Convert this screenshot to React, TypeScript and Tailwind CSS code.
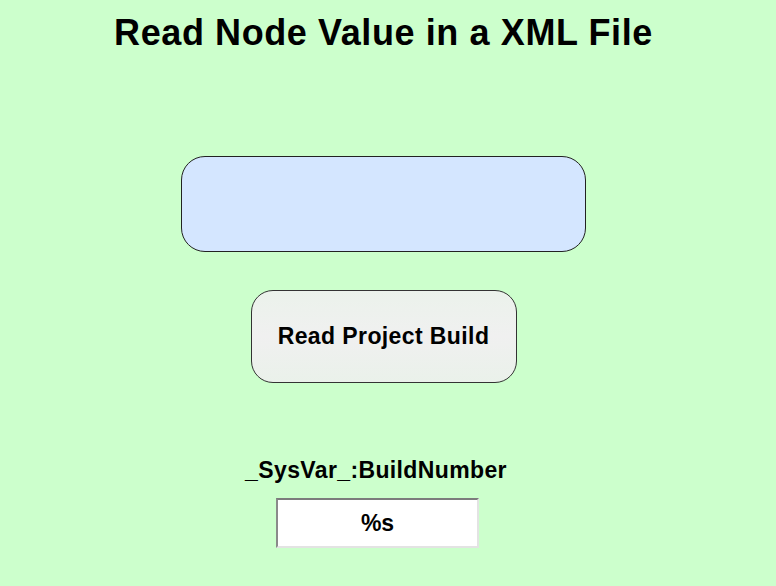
export default function App() {
  return (
    <div className="w-[776px] h-[586px] bg-[#ccffcc] overflow-hidden" style={{ fontFamily: '"Liberation Sans", Arial, sans-serif' }}>
      <div className="w-[767px] flex flex-col items-center pt-[15px]">
        <h1 className="text-[36px] leading-[36px] h-[36px] font-bold text-black tracking-[0.6px] whitespace-nowrap">
          Read Node Value in a XML File
        </h1>
        <div className="mt-[105px] w-[405px] h-[96px] rounded-[24px] border border-[#222] bg-[#d4e6ff]" />
        <button className="mt-[38px] w-[266px] h-[93px] rounded-[22px] border border-[#333] bg-gradient-to-b from-[#ebf2eb] via-[#f0f0f0] to-[#eaf1ea] flex items-center justify-center text-[23px] leading-[23px] font-bold text-black tracking-[0.4px] whitespace-nowrap">
          Read Project Build
        </button>
        <div className="mt-[76px] mr-[15px] h-[23px] text-[23px] leading-[23px] font-bold text-black tracking-[0.37px] whitespace-nowrap">
          _SysVar_:BuildNumber
        </div>
        <div className="mt-[16px] mr-[12px] w-[203px] h-[50px] bg-white border-2 border-t-[#7c7c7c] border-l-[#8a8a8a] border-b-[#e3e3e3] border-r-[#e3e3e3] flex items-center justify-center text-[23px] leading-[23px] font-bold text-black">
          %s
        </div>
      </div>
    </div>
  );
}
